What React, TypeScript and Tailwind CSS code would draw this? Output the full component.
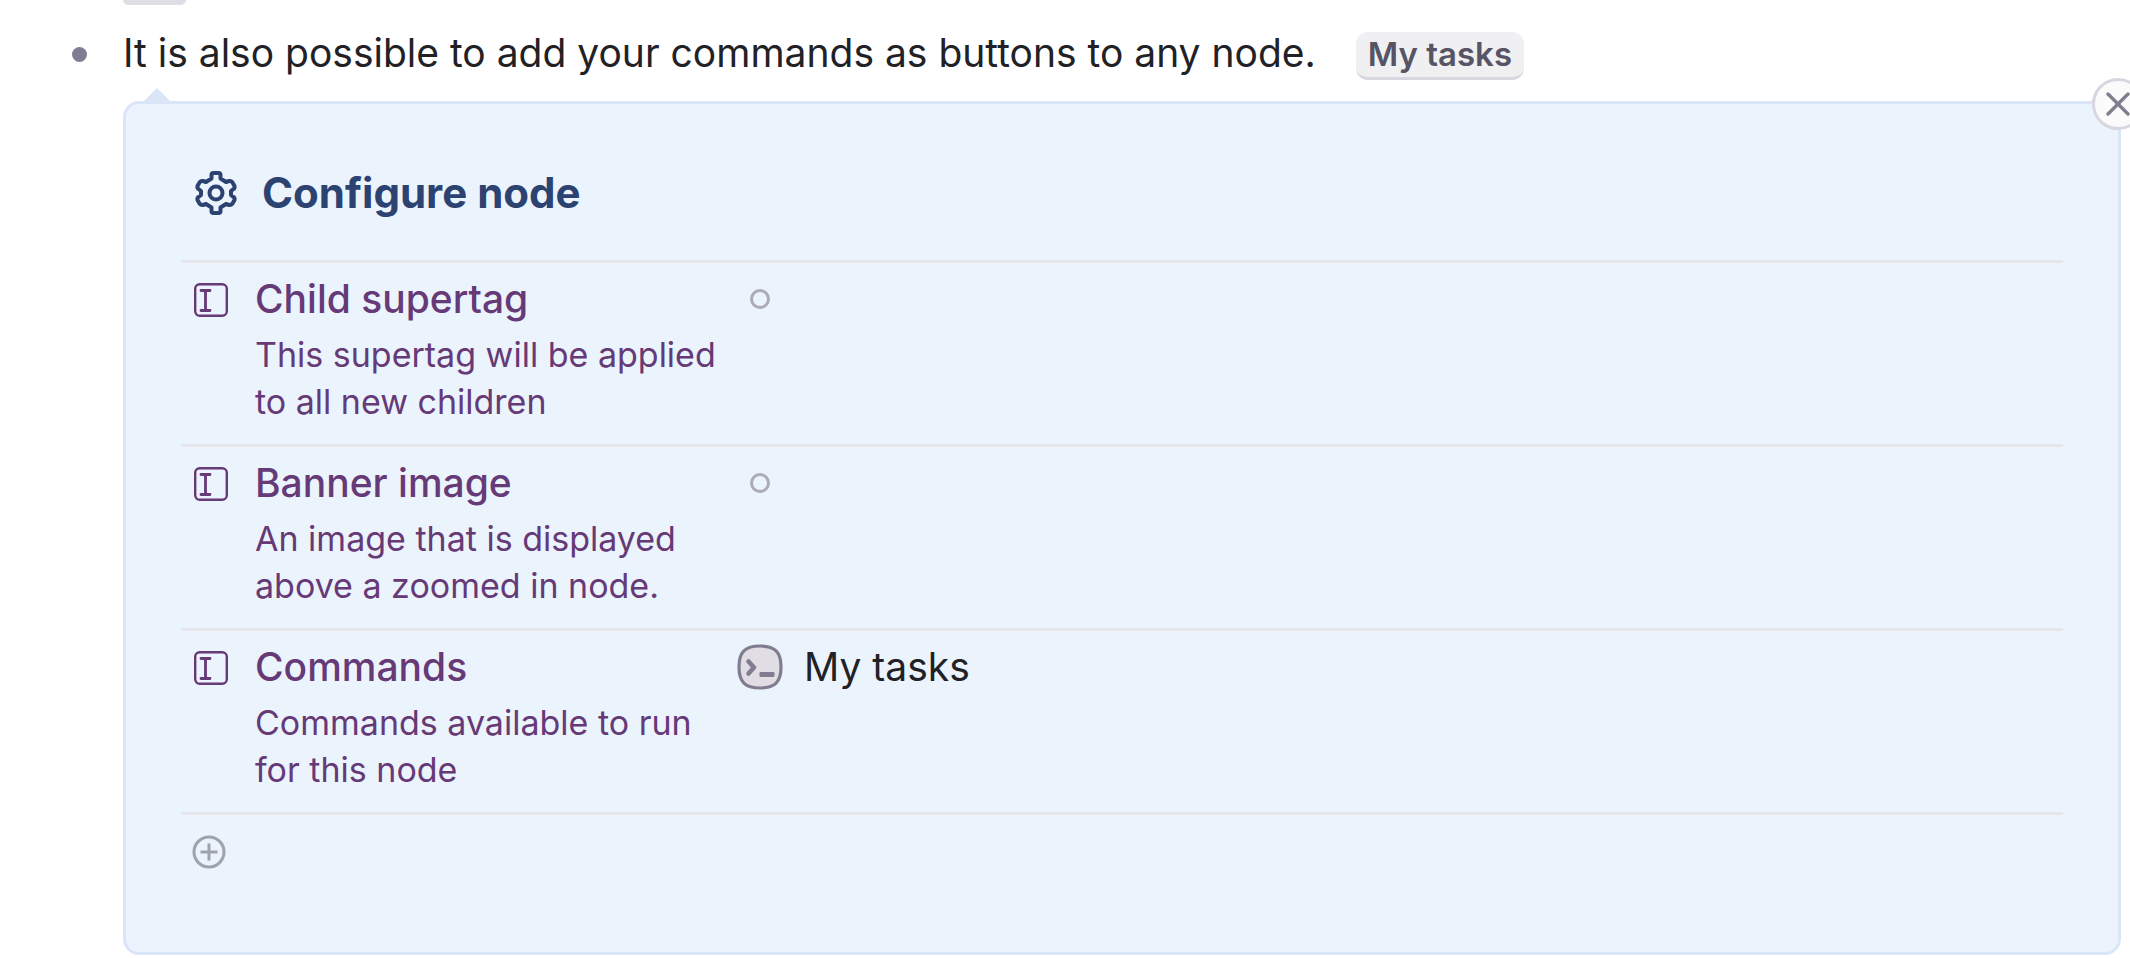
import React from 'react';
import { X } from 'lucide-react';

type Field = {
  name: string;
  description: string;
  command?: string;
};

const fields: Field[] = [
  { name: 'Child supertag', description: 'This supertag will be applied to all new children' },
  { name: 'Banner image', description: 'An image that is displayed above a zoomed in node.' },
  { name: 'Commands', description: 'Commands available to run for this node', command: 'My tasks' },
];

const GearIcon = () => (
  <svg viewBox="0 0 44 46" className="h-[46px] w-11 shrink-0" fill="none" stroke="currentColor" strokeWidth="4" strokeLinejoin="round" aria-hidden="true">
    <path d="M17.500 5Q17.500 3 19.500 3H24.500Q26.500 3 26.500 5V8.500L32 12L35 11Q37 10.500 38.500 12.500L40.500 16Q41 18 39.500 19L37 21V25L39.500 27Q41 28 40.500 30L38.500 33.500Q37 35.500 35 35L32 34L26.500 37.500V41Q26.500 43 24.500 43H19.500Q17.500 43 17.500 41V37.500L12 34L9 35Q7 35.500 5.500 33.500L3.500 30Q3 28 4.500 27L7 25V21L4.500 19Q3 18 3.500 16L5.500 12.500Q7 10.500 9 11L12 12L17.500 8.500Z" />
    <circle cx="22" cy="23" r="6.500" />
  </svg>
);

const FieldIcon = () => (
  <svg viewBox="0 0 34 34" className="mt-[11px] h-[34px] w-[34px] shrink-0" fill="none" stroke="currentColor" aria-hidden="true">
    <rect x="1.200" y="1.200" width="31.600" height="31.600" rx="4.500" strokeWidth="2.400" />
    <path d="M7 7.500h9M7 27.500h9M11.500 7.500v20" strokeWidth="2.800" strokeLinecap="round" />
  </svg>
);

const CommandIcon = () => (
  <svg viewBox="0 0 46 46" className="h-[46px] w-[46px] shrink-0" fill="none" aria-hidden="true">
    <path d="M23 2C38 2 44 8 44 23S38 44 23 44S2 38 2 23S8 2 23 2Z" fill="#e0dee4" stroke="#817c90" strokeWidth="3.200" />
    <path d="M11.500 17.500l5.500 6l-5.500 6" stroke="#817c90" strokeWidth="4.600" strokeLinecap="round" strokeLinejoin="round" />
    <rect x="22.500" y="28" width="15" height="5" rx="1.200" fill="#817c90" />
  </svg>
);

const AddIcon = () => (
  <svg viewBox="0 0 34 34" className="h-[34px] w-[34px]" fill="none" stroke="currentColor" strokeWidth="3" aria-hidden="true">
    <circle cx="17" cy="17" r="15" />
    <path d="M8.500 17h17M17 8.500v17" />
  </svg>
);

const FieldRow = ({ field }: { field: Field }) => (
  <div className="flex border-t-[3px] border-[#e6e5eb] pt-[9px] pb-[19px]">
    <div className="flex w-[556px] shrink-0 gap-[27px] pl-[13px] text-[#663977]">
      <FieldIcon />
      <div className="w-[472px]">
        <h3 className="text-[39px] leading-[54px] font-medium">{field.name}</h3>
        <p className="mt-[5px] text-[34px] leading-[47px]">{field.description}</p>
      </div>
    </div>
    <div className="flex h-[54px] flex-1 items-center">
      {field.command ? (
        <div className="flex items-center gap-[21px]">
          <CommandIcon />
          <span className="text-[39px] leading-[54px] text-[#212126]">{field.command}</span>
        </div>
      ) : (
        <span className="ml-[13px] h-5 w-5 rounded-full border-[3px] border-[#acabb8]" />
      )}
    </div>
  </div>
);

export default function App() {
  return (
    <main className="overflow-hidden bg-white pr-[9px] pl-[123px] font-[Inter,sans-serif] text-[#212126]">
      {/* Bottom edge of the button on the node above */}
      <div className="h-[5px] w-[63px] rounded-b-lg bg-[#e0dee4]" />

      <div className="relative flex h-24 items-center">
        <span className="absolute top-[42px] -left-[51px] h-[15px] w-[15px] rounded-full bg-[#817c90]" />
        <p className="text-[39px] leading-[54px]">It is also possible to add your commands as buttons to any node.</p>
        <button type="button" className="mt-[6px] ml-10 h-12 rounded-xl border-b-[3px] border-[#d8d6df] bg-[#f0f0f3] px-3 text-[33px] leading-[45px] font-semibold text-[#575465]">
          My tasks
        </button>
      </div>

      <section className="relative rounded-2xl border-[3px] border-[#dae5f8] bg-[#ebf3fd] px-[55px] pt-[52px] pb-[83px]">
        <span className="absolute -top-4 left-[17px] border-x-[14px] border-b-[14px] border-x-transparent border-b-[#dae5f8]" />
        <button type="button" aria-label="Close" className="absolute -top-[26px] -right-[26px] flex h-[52px] w-[52px] items-center justify-center rounded-full border-[3px] border-[#d8d6df] bg-[#fbfbfc] text-[#817c90]">
          <X size={40} strokeWidth={2} className="shrink-0" />
        </button>

        <header className="flex h-[104px] items-start gap-6 pl-[13px] text-[#2c4270]">
          <div className="flex h-[74px] items-center">
            <GearIcon />
          </div>
          <h2 className="text-[42px] leading-[74px] font-bold">Configure node</h2>
        </header>

        {fields.map((field) => (
          <FieldRow key={field.name} field={field} />
        ))}

        <div className="border-t-[3px] border-[#e6e5eb] pt-5 pl-[11px]">
          <button type="button" aria-label="Add field" className="block text-[#9fa2ae]">
            <AddIcon />
          </button>
        </div>
      </section>
    </main>
  );
}
